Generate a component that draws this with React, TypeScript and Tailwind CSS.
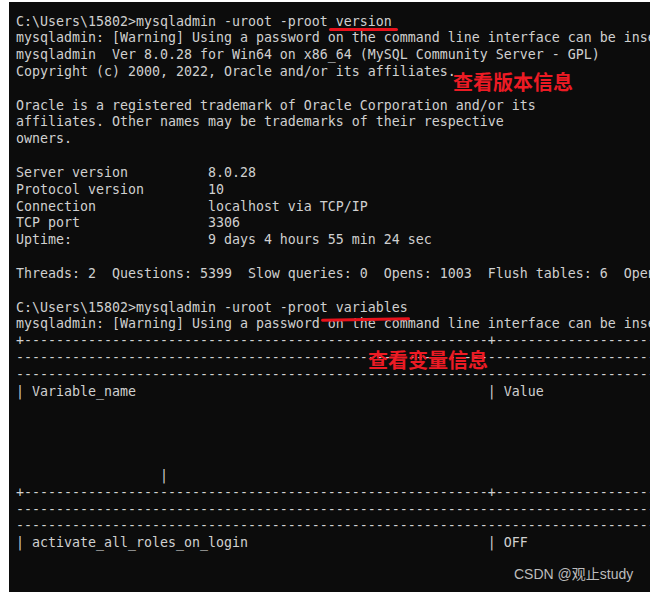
import React from "react";

const dash = (n: number) => "-".repeat(n);
const pad = (s: string, n: number) => s + " ".repeat(Math.max(0, n - s.length));

const lines: string[] = [
  "C:\\Users\\15802>mysqladmin -uroot -proot version",
  "mysqladmin: [Warning] Using a password on the command line interface can be insecure.",
  "mysqladmin  Ver 8.0.28 for Win64 on x86_64 (MySQL Community Server - GPL)",
  "Copyright (c) 2000, 2022, Oracle and/or its affiliates.",
  "",
  "Oracle is a registered trademark of Oracle Corporation and/or its",
  "affiliates. Other names may be trademarks of their respective",
  "owners.",
  "",
  "Server version          8.0.28",
  "Protocol version        10",
  "Connection              localhost via TCP/IP",
  "TCP port                3306",
  "Uptime:                 9 days 4 hours 55 min 24 sec",
  "",
  "Threads: 2  Questions: 5399  Slow queries: 0  Opens: 1003  Flush tables: 6  Open tables: 71  Queries per second avg: 0.000",
  "",
  "C:\\Users\\15802>mysqladmin -uroot -proot variables",
  "mysqladmin: [Warning] Using a password on the command line interface can be insecure.",
  "+" + dash(58) + "+" + dash(40),
  dash(100),
  dash(100),
  pad("| Variable_name", 59) + "| Value",
  "",
  "",
  "",
  "",
  pad("", 18) + "|",
  "+" + dash(58) + "+" + dash(40),
  dash(100),
  dash(100),
  pad("| activate_all_roles_on_login", 59) + "| OFF",
  "",
  "",
];

export default function App() {
  return (
    <div className="w-[657px] h-[598px] bg-white pt-[2px] pl-[9px]">
      <div className="relative w-[641px] h-[590px] bg-[#0c0c0c] overflow-hidden">
        <div
          className="pt-[11.5px] pl-[7px] text-[13.29px] leading-[16.84px] text-[#d0d0d0] whitespace-pre"
          style={{ fontFamily: '"DejaVu Sans Mono", monospace' }}
        >
          {lines.map((l, i) => (
            <div key={i} className="h-[16.84px]">
              {l}
            </div>
          ))}
        </div>

        {/* red annotations */}
        <div className="absolute left-[320px] top-[26px] w-[69px] h-[3px] bg-[#e8121c] rounded-full" />
        <div
          className="absolute left-[444px] top-[68px] text-[20px] leading-[24px] font-bold text-[#ec1b24]"
          style={{ fontFamily: '"Noto Sans CJK SC", sans-serif' }}
        >
          查看版本信息
        </div>
        <div className="absolute left-[312px] top-[316px] w-[89px] h-[3px] bg-[#e8121c] rounded-full -rotate-[1deg]" />
        <div
          className="absolute left-[359px] top-[346px] text-[20px] leading-[24px] font-bold text-[#ec1b24]"
          style={{ fontFamily: '"Noto Sans CJK SC", sans-serif' }}
        >
          查看变量信息
        </div>

        {/* watermark */}
        <div
          className="absolute left-[505px] top-[563px] text-[14px] leading-[18px] text-[#bdbdbd]"
          style={{ fontFamily: '"Liberation Sans", "Noto Sans CJK SC", sans-serif' }}
        >
          CSDN @观止study
        </div>
      </div>
    </div>
  );
}
